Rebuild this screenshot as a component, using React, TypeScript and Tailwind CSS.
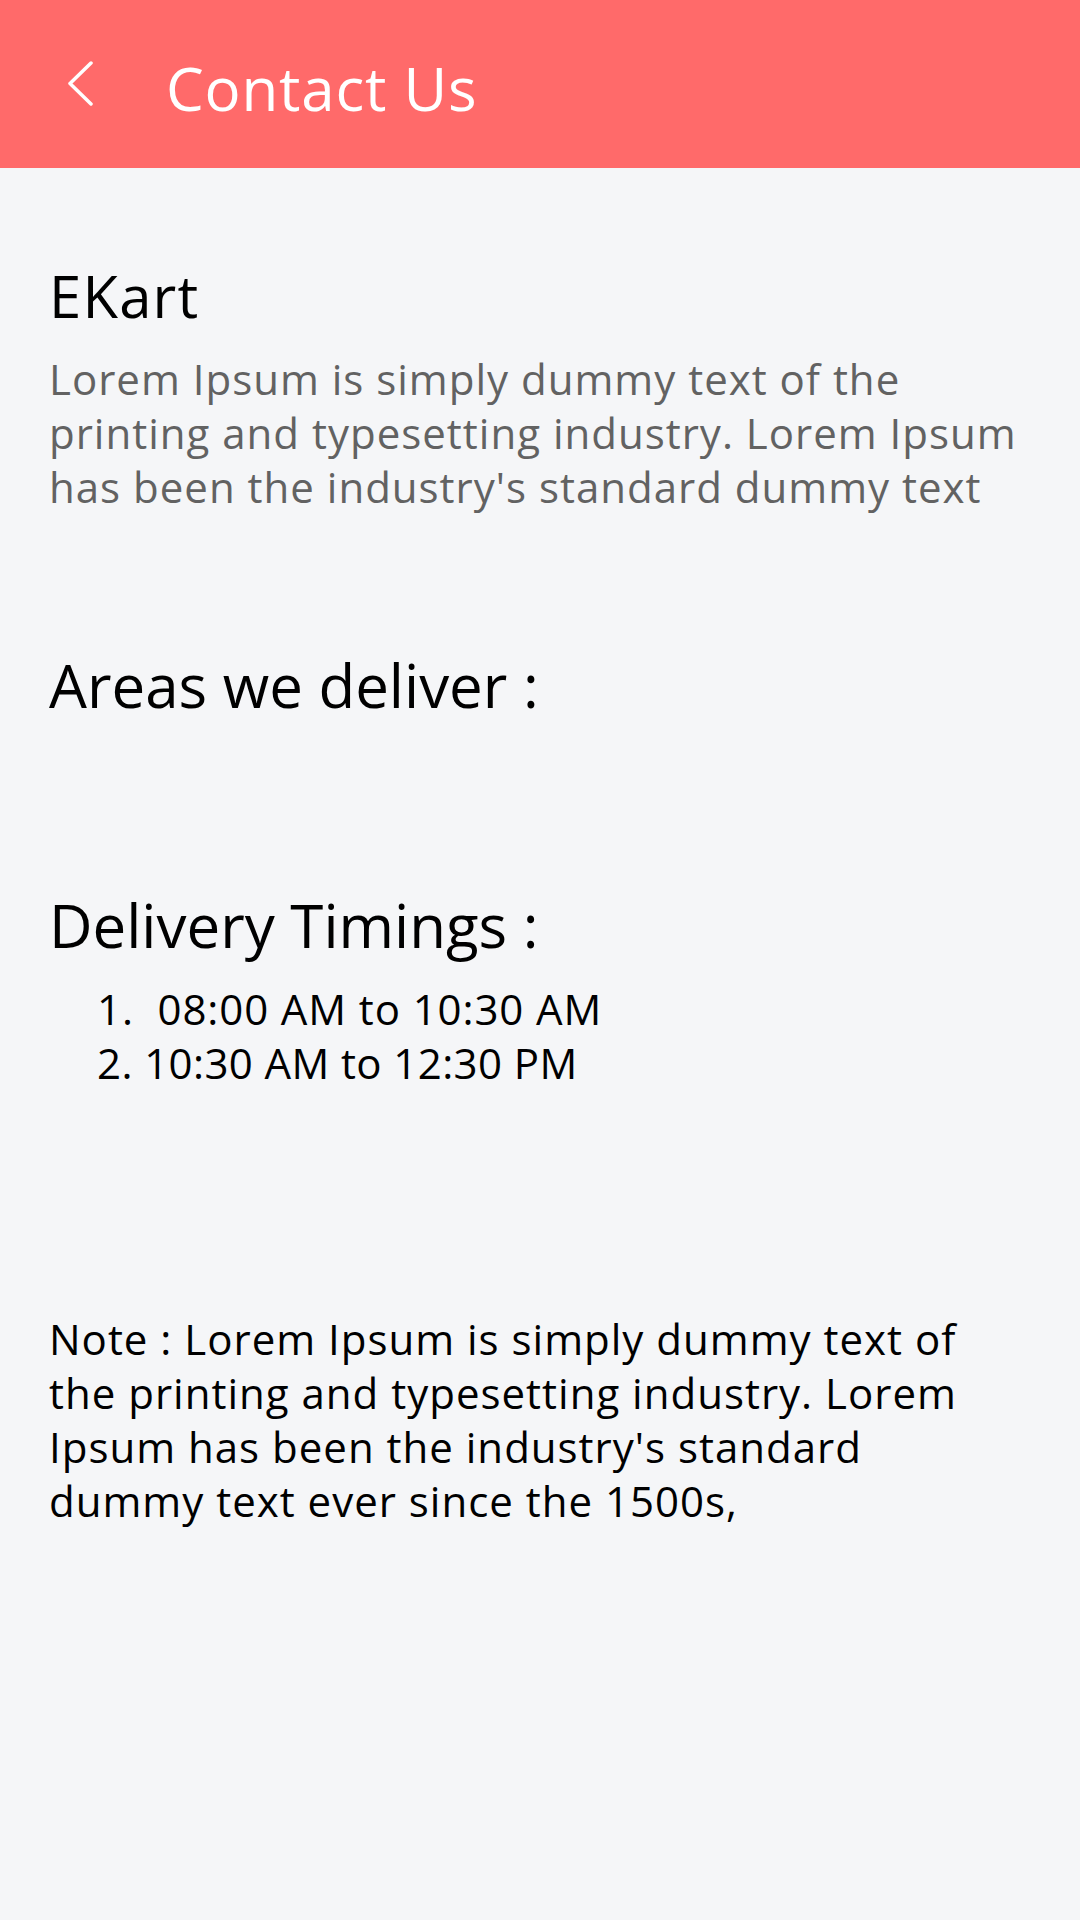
export default function App() {
    return (
        <div className="min-h-[1920px] w-[1080px] bg-[#f5f6f8] font-['Open_Sans','Liberation_Sans',sans-serif]">
            <div className="flex h-[168px] items-start bg-[#ff6a6a]">
                <svg className="ml-[67px] mt-[60px]" width="26" height="47" viewBox="0 0 26 47" fill="none">
                    <path d="M24 3 L3 23.5 L24 44" stroke="white" strokeWidth="3.5" strokeLinecap="round" strokeLinejoin="round" />
                </svg>
                <h1 className="ml-[73px] mt-[58px] text-[60px] leading-none tracking-[0.8px] text-white">Contact Us</h1>
            </div>

            <div className="pl-[49px] pr-[58px]">
                <h2 className="mt-[99px] text-[58px] leading-none tracking-[1.2px] text-black">EKart</h2>
                <p className="mt-[27px] text-[42px] leading-[54px] tracking-[1px] text-[#626262]">
                    Lorem Ipsum is simply dummy text of the printing and typesetting industry. Lorem Ipsum has been the industry's standard dummy text
                </p>

                <h2 className="mt-[141px] text-[60px] leading-none text-black">Areas we deliver :</h2>

                <h2 className="mt-[180px] text-[60px] leading-none text-black">Delivery Timings :</h2>
                <div className="mt-[27px] pl-[48px] text-[42px] leading-[54px] whitespace-pre text-black">
                    <p className="tracking-[0.9px]">1.  08:00 AM to 10:30 AM</p>
                    <p className="tracking-[0.4px]">2. 10:30 AM to 12:30 PM</p>
                </div>

                <p className="mt-[222px] text-[42px] leading-[54px] tracking-[1px] text-black">
                    Note : Lorem Ipsum is simply dummy text of the printing and typesetting industry. Lorem Ipsum has been the industry's standard dummy text ever since the 1500s,
                </p>
            </div>
        </div>
    );
}
